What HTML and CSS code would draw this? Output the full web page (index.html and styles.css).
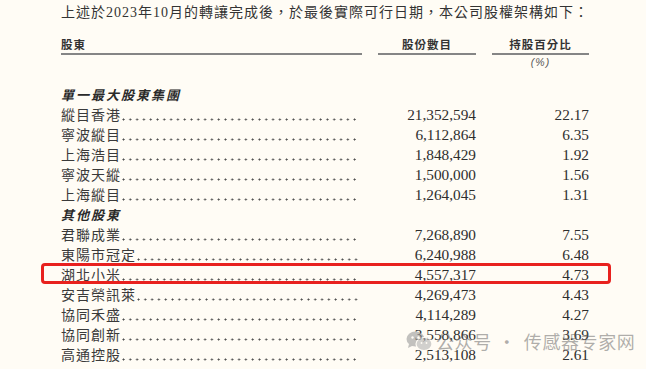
FILE: index.html
```html
<!DOCTYPE html>
<html lang="zh-Hant">
<head>
<meta charset="utf-8">
<title>股權架構</title>
<link rel="stylesheet" href="styles.css">
</head>
<body>
<main class="doc">
  <p class="intro">上述於2023年10月的轉讓完成後，於最後實際可行日期，本公司股權架構如下：</p>
  <div class="table">
    <div class="hcell hleft">股東</div>
    <div class="hcell">股份數目</div>
    <div class="hcell">持股百分比</div>

    <div class="unit"></div>
    <div class="unit"></div>
    <div class="unit unit-pct">(%)</div>

    <div class="section section-first">單一最大股東集團</div>

    <div class="name"><span>縱目香港</span><i class="leader"></i></div><div class="num">21,352,594</div><div class="num">22.17</div>
    <div class="name"><span>寧波縱目</span><i class="leader"></i></div><div class="num">6,112,864</div><div class="num">6.35</div>
    <div class="name"><span>上海浩目</span><i class="leader"></i></div><div class="num">1,848,429</div><div class="num">1.92</div>
    <div class="name"><span>寧波天縱</span><i class="leader"></i></div><div class="num">1,500,000</div><div class="num">1.56</div>
    <div class="name"><span>上海縱目</span><i class="leader"></i></div><div class="num">1,264,045</div><div class="num">1.31</div>

    <div class="section">其他股東</div>

    <div class="name"><span>君聯成業</span><i class="leader"></i></div><div class="num">7,268,890</div><div class="num">7.55</div>
    <div class="name"><span>東陽市冠定</span><i class="leader"></i></div><div class="num">6,240,988</div><div class="num">6.48</div>
    <div class="name marked"><span>湖北小米</span><i class="leader"></i></div><div class="num">4,557,317</div><div class="num">4.73</div>
    <div class="name"><span>安吉榮訊萊</span><i class="leader"></i></div><div class="num">4,269,473</div><div class="num">4.43</div>
    <div class="name"><span>協同禾盛</span><i class="leader"></i></div><div class="num">4,114,289</div><div class="num">4.27</div>
    <div class="name"><span>協同創新</span><i class="leader"></i></div><div class="num">3,558,866</div><div class="num">3.69</div>
    <div class="name"><span>高通控股</span><i class="leader"></i></div><div class="num">2,513,108</div><div class="num">2.61</div>
  </div>

  <div class="watermark">
    <svg class="wm-icon" width="26" height="20" viewBox="0 0 26 20">
      <ellipse cx="9.5" cy="8" rx="9" ry="7.5" fill="#9a9a9a"/>
      <path d="M3 13 L2 17 L7 14.5 Z" fill="#9a9a9a"/>
      <ellipse cx="18" cy="13" rx="8" ry="6.5" fill="#b4b4b4" stroke="#fffcf5" stroke-width="1.2"/>
      <circle cx="6.5" cy="6.5" r="1.2" fill="#fffcf5"/>
      <circle cx="12.5" cy="6.5" r="1.2" fill="#fffcf5"/>
      <circle cx="15.5" cy="12" r="0.9" fill="#fffcf5"/>
      <circle cx="20.5" cy="12" r="0.9" fill="#fffcf5"/>
    </svg>
    <span class="wm-text">公众号</span><span class="wm-dot">·</span><span class="wm-text">传感器专家网</span>
  </div>
</main>
</body>
</html>
```

FILE: styles.css
```css
html, body {
  margin: 0;
  padding: 0;
  background: #fffcf5;
}

body {
  width: 646px;
  height: 369px;
  overflow: hidden;
  position: relative;
}

.doc {
  padding: 3px 0 0 61px;
  color: #333;
}

.intro {
  margin: 0;
  font-family: "Liberation Serif", "Noto Sans CJK TC", serif;
  font-size: 14px;
  line-height: 20px;
  letter-spacing: 1px;
  color: #333;
  white-space: nowrap;
}

.table {
  margin-top: 14px;
  width: 528px;
  display: grid;
  grid-template-columns: 301px 98px 97px;
  column-gap: 16px;
}

.hcell {
  font-family: "Noto Sans CJK TC", sans-serif;
  font-weight: bold;
  font-size: 11.5px;
  line-height: 14px;
  letter-spacing: 1px;
  text-align: center;
  padding-bottom: 2px;
  border-bottom: 2px solid #858585;
  color: #333;
}

.hleft {
  text-align: left;
}

.unit {
  height: 14px;
}

.unit-pct {
  font-family: "Liberation Sans", sans-serif;
  font-style: italic;
  font-size: 10.5px;
  line-height: 14px;
  letter-spacing: 1px;
  text-align: center;
  color: #555;
}

.section {
  grid-column: 1 / -1;
  font-family: "Noto Sans CJK TC", sans-serif;
  font-weight: bold;
  font-style: italic;
  font-size: 13px;
  line-height: 20px;
  letter-spacing: 2px;
  color: #2a2a2a;
}

.section-first {
  margin-top: 16px;
}

.name {
  display: flex;
  height: 20px;
  font-family: "Noto Sans CJK TC", sans-serif;
  font-size: 14px;
  line-height: 19px;
  letter-spacing: 1px;
  color: #3a3a3a;
  white-space: nowrap;
}

.leader {
  flex: 1;
  margin: 0 4px 0 1px;
  background-image: radial-gradient(circle at 1.5px 1.5px, #4a4a4a 0.8px, rgba(0,0,0,0) 1.25px);
  background-size: 6.8px 3px;
  background-repeat: repeat-x;
  background-position: 0 12.5px;
}

.num {
  font-family: "Liberation Serif", serif;
  font-size: 15.3px;
  line-height: 20px;
  text-align: right;
  color: #2e2e2e;
}

.marked {
  position: relative;
}

.marked::after {
  content: "";
  position: absolute;
  left: -20px;
  width: 570px;
  top: -2px;
  height: 21px;
  border: 3px solid #e8211e;
  border-radius: 4px;
  box-sizing: border-box;
}

.watermark {
  position: absolute;
  left: 406px;
  top: 330px;
  display: flex;
  align-items: center;
  font-family: "Noto Sans CJK SC", sans-serif;
  font-size: 18px;
  line-height: 22px;
  color: rgba(95, 95, 95, 0.5);
}

.wm-icon {
  opacity: 0.6;
  margin-right: 4px;
}

.wm-text {
  letter-spacing: 0.6px;
}

.wm-dot {
  margin: 0 8px 0 6px;
}
```
